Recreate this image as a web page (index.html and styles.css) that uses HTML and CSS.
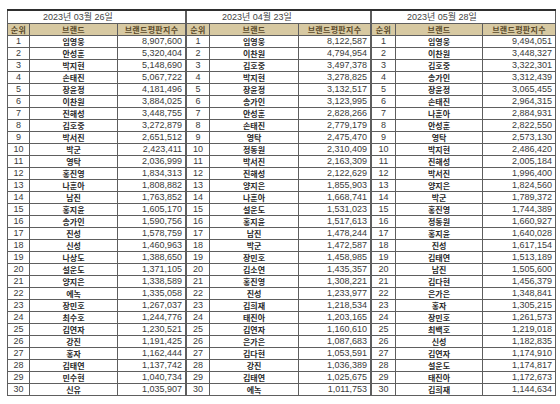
FILE: index.html
```html
<!DOCTYPE html>
<html lang="ko">
<head>
<meta charset="utf-8">
<link rel="stylesheet" href="styles.css">
</head>
<body>
<div class="wrap">
<table class="rank t1">
<colgroup><col class="c1"><col class="c2"><col class="c3"></colgroup>
<tr class="date"><td colspan="3">2023년 03월 26일</td></tr>
<tr class="head"><th>순위</th><th>브랜드</th><th>브랜드평판지수</th></tr>
<tr><td>1</td><td>임영웅</td><td>8,907,600</td></tr>
<tr><td>2</td><td>안성훈</td><td>5,320,404</td></tr>
<tr><td>3</td><td>박지현</td><td>5,148,690</td></tr>
<tr><td>4</td><td>손태진</td><td>5,067,722</td></tr>
<tr><td>5</td><td>장윤정</td><td>4,181,496</td></tr>
<tr><td>6</td><td>이찬원</td><td>3,884,025</td></tr>
<tr><td>7</td><td>진해성</td><td>3,448,755</td></tr>
<tr><td>8</td><td>김호중</td><td>3,272,879</td></tr>
<tr><td>9</td><td>박서진</td><td>2,651,512</td></tr>
<tr><td>10</td><td>박군</td><td>2,423,411</td></tr>
<tr><td>11</td><td>영탁</td><td>2,036,999</td></tr>
<tr><td>12</td><td>홍진영</td><td>1,834,313</td></tr>
<tr><td>13</td><td>나훈아</td><td>1,808,882</td></tr>
<tr><td>14</td><td>남진</td><td>1,763,852</td></tr>
<tr><td>15</td><td>홍지윤</td><td>1,605,170</td></tr>
<tr><td>16</td><td>송가인</td><td>1,590,756</td></tr>
<tr><td>17</td><td>진성</td><td>1,578,759</td></tr>
<tr><td>18</td><td>신성</td><td>1,460,963</td></tr>
<tr><td>19</td><td>나상도</td><td>1,388,650</td></tr>
<tr><td>20</td><td>설운도</td><td>1,371,105</td></tr>
<tr><td>21</td><td>양지은</td><td>1,338,589</td></tr>
<tr><td>22</td><td>에녹</td><td>1,335,058</td></tr>
<tr><td>23</td><td>장민호</td><td>1,267,037</td></tr>
<tr><td>24</td><td>최수호</td><td>1,244,776</td></tr>
<tr><td>25</td><td>김연자</td><td>1,230,521</td></tr>
<tr><td>26</td><td>강진</td><td>1,191,425</td></tr>
<tr><td>27</td><td>홍자</td><td>1,162,444</td></tr>
<tr><td>28</td><td>김태연</td><td>1,137,742</td></tr>
<tr><td>29</td><td>민수현</td><td>1,040,734</td></tr>
<tr><td>30</td><td>신유</td><td>1,035,907</td></tr>
</table>
<table class="rank t2">
<colgroup><col class="c1"><col class="c2"><col class="c3"></colgroup>
<tr class="date"><td colspan="3">2023년 04월 23일</td></tr>
<tr class="head"><th>순위</th><th>브랜드</th><th>브랜드평판지수</th></tr>
<tr><td>1</td><td>임영웅</td><td>8,122,587</td></tr>
<tr><td>2</td><td>이찬원</td><td>4,794,954</td></tr>
<tr><td>3</td><td>김호중</td><td>3,497,378</td></tr>
<tr><td>4</td><td>박지현</td><td>3,278,825</td></tr>
<tr><td>5</td><td>장윤정</td><td>3,132,517</td></tr>
<tr><td>6</td><td>송가인</td><td>3,123,995</td></tr>
<tr><td>7</td><td>안성훈</td><td>2,828,266</td></tr>
<tr><td>8</td><td>손태진</td><td>2,779,179</td></tr>
<tr><td>9</td><td>영탁</td><td>2,475,470</td></tr>
<tr><td>10</td><td>정동원</td><td>2,310,409</td></tr>
<tr><td>11</td><td>박서진</td><td>2,163,309</td></tr>
<tr><td>12</td><td>진해성</td><td>2,122,629</td></tr>
<tr><td>13</td><td>양지은</td><td>1,855,903</td></tr>
<tr><td>14</td><td>나훈아</td><td>1,668,741</td></tr>
<tr><td>15</td><td>설운도</td><td>1,531,023</td></tr>
<tr><td>16</td><td>홍지윤</td><td>1,517,613</td></tr>
<tr><td>17</td><td>남진</td><td>1,478,244</td></tr>
<tr><td>18</td><td>박군</td><td>1,472,587</td></tr>
<tr><td>19</td><td>장민호</td><td>1,458,985</td></tr>
<tr><td>20</td><td>김소연</td><td>1,435,357</td></tr>
<tr><td>21</td><td>홍진영</td><td>1,308,221</td></tr>
<tr><td>22</td><td>진성</td><td>1,233,977</td></tr>
<tr><td>23</td><td>김희재</td><td>1,218,534</td></tr>
<tr><td>24</td><td>태진아</td><td>1,203,165</td></tr>
<tr><td>25</td><td>김연자</td><td>1,160,610</td></tr>
<tr><td>26</td><td>은가은</td><td>1,087,683</td></tr>
<tr><td>27</td><td>김다현</td><td>1,053,591</td></tr>
<tr><td>28</td><td>강진</td><td>1,036,389</td></tr>
<tr><td>29</td><td>김태연</td><td>1,025,675</td></tr>
<tr><td>30</td><td>에녹</td><td>1,011,753</td></tr>
</table>
<table class="rank t3">
<colgroup><col class="c1"><col class="c2"><col class="c3"></colgroup>
<tr class="date"><td colspan="3">2023년 05월 28일</td></tr>
<tr class="head"><th>순위</th><th>브랜드</th><th>브랜드평판지수</th></tr>
<tr><td>1</td><td>임영웅</td><td>9,494,051</td></tr>
<tr><td>2</td><td>이찬원</td><td>3,448,327</td></tr>
<tr><td>3</td><td>김호중</td><td>3,322,301</td></tr>
<tr><td>4</td><td>송가인</td><td>3,312,439</td></tr>
<tr><td>5</td><td>장윤정</td><td>3,065,455</td></tr>
<tr><td>6</td><td>손태진</td><td>2,964,315</td></tr>
<tr><td>7</td><td>나훈아</td><td>2,884,931</td></tr>
<tr><td>8</td><td>안성훈</td><td>2,822,550</td></tr>
<tr><td>9</td><td>영탁</td><td>2,573,130</td></tr>
<tr><td>10</td><td>박지현</td><td>2,486,420</td></tr>
<tr><td>11</td><td>진해성</td><td>2,005,184</td></tr>
<tr><td>12</td><td>박서진</td><td>1,996,400</td></tr>
<tr><td>13</td><td>양지은</td><td>1,824,560</td></tr>
<tr><td>14</td><td>박군</td><td>1,789,372</td></tr>
<tr><td>15</td><td>홍진영</td><td>1,744,389</td></tr>
<tr><td>16</td><td>정동원</td><td>1,660,927</td></tr>
<tr><td>17</td><td>홍지윤</td><td>1,640,028</td></tr>
<tr><td>18</td><td>진성</td><td>1,617,154</td></tr>
<tr><td>19</td><td>김태연</td><td>1,513,189</td></tr>
<tr><td>20</td><td>남진</td><td>1,505,600</td></tr>
<tr><td>21</td><td>김다현</td><td>1,456,379</td></tr>
<tr><td>22</td><td>은가은</td><td>1,348,841</td></tr>
<tr><td>23</td><td>홍자</td><td>1,305,215</td></tr>
<tr><td>24</td><td>장민호</td><td>1,261,573</td></tr>
<tr><td>25</td><td>최백호</td><td>1,219,018</td></tr>
<tr><td>26</td><td>신성</td><td>1,182,835</td></tr>
<tr><td>27</td><td>김연자</td><td>1,174,910</td></tr>
<tr><td>28</td><td>설운도</td><td>1,174,817</td></tr>
<tr><td>29</td><td>태진아</td><td>1,172,673</td></tr>
<tr><td>30</td><td>김희재</td><td>1,144,634</td></tr>
</table>
</div>
</body>
</html>
```
FILE: styles.css
```css
html, body {
  margin: 0;
  padding: 0;
  background: #ffffff;
}
.wrap {
  display: flex;
  align-items: flex-start;
  padding: 9px 0 0 7px;
}
.rank {
  border-collapse: collapse;
  table-layout: fixed;
  border: 1px solid #3a3a3a;
  border-top: 2px solid #2e2e2e;
  font-family: "Liberation Sans", "Noto Sans CJK KR", sans-serif;
  color: #333333;
}
.t1 { width: 178px; }
.t2 { width: 184px; }
.t3 { width: 184px; }
.t1 .c1 { width: 22px; }
.t1 .c2 { width: 88px; }
.t1 .c3 { width: 68px; }
.t2 .c1 { width: 23px; }
.t2 .c2 { width: 89px; }
.t2 .c3 { width: 72px; }
.t3 .c1 { width: 24px; }
.t3 .c2 { width: 87px; }
.t3 .c3 { width: 73px; }
.rank td, .rank th {
  padding: 0;
  border: 1px solid #5e5e5e;
  height: 11px;
  line-height: 11px;
  white-space: nowrap;
  overflow: hidden;
}
.rank td:nth-child(1) {
  text-align: center;
  font-size: 9px;
  color: #3a3a3a;
}
.rank td:nth-child(2) {
  text-align: center;
  font-family: "Noto Sans CJK KR", sans-serif;
  font-weight: 700;
  font-size: 8px;
  color: #2a2a2a;
}
.rank td:nth-child(3) {
  text-align: right;
  padding-right: 3px;
  font-size: 9px;
  color: #3a3a3a;
}
.rank .date td {
  height: 12px;
  line-height: 12px;
  text-align: left;
  padding-left: 35px;
  font-family: "Liberation Sans", "Noto Sans CJK KR", sans-serif;
  font-weight: 400;
  font-size: 9px;
  color: #444444;
  border-bottom: 1px solid #5e5e5e;
}
.rank .head th {
  background: #d7c9a2;
  font-family: "Noto Sans CJK KR", sans-serif;
  font-weight: 700;
  font-size: 8px;
  color: #5a4a2a;
  text-align: center;
  letter-spacing: 0.3px;
}
```
